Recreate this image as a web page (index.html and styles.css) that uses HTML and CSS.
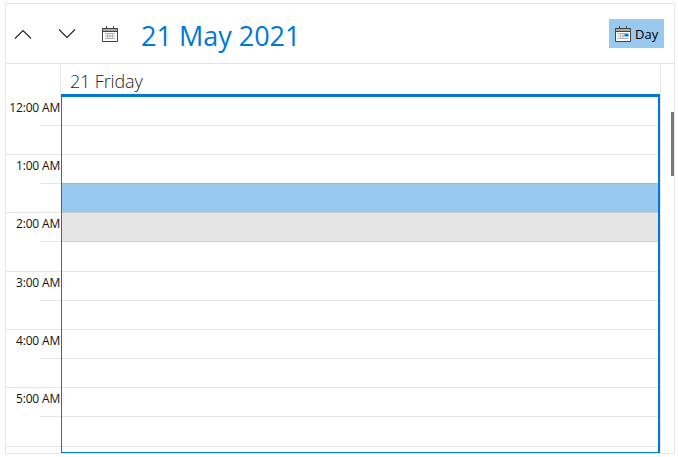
FILE: index.html
```html
<!DOCTYPE html>
<html lang="en">
<head>
<meta charset="utf-8">
<title>Day view</title>
<link rel="stylesheet" href="styles.css">
</head>
<body>
<div class="scheduler">
  <header class="toolbar">
    <div class="nav">
      <svg class="chev" width="18" height="12" viewBox="0 0 18 12"><path d="M1 10.500 9 2.500 17 10.500"/></svg>
      <svg class="chev second" width="18" height="12" viewBox="0 0 18 12"><path d="M1 1.500 9 9.500 17 1.500"/></svg>
      <svg class="cal" width="18" height="18" viewBox="0 0 18 18"><path class="dk" d="M1.500 3.500h15v13h-15z"/><path class="bar" d="M1.500 3.500h15v3h-15z"/><path class="dk" d="M5.500 1v3M12.500 1v3"/><path class="gr" d="M4 8.500h10M4 11h10M4 13.500h10M6.500 8v6M9 8v6M11.500 8v6"/></svg>
    </div>
    <h1 class="title">21 May 2021</h1>
    <button class="view-btn">
      <svg class="cal" width="18" height="18" viewBox="0 0 18 18"><path class="wh" d="M1.500 3.500h15v13h-15z"/><path class="bar" d="M1.500 3.500h15v3h-15z"/><path class="dk" d="M5.500 1v3M12.500 1v3"/><path class="gr" d="M3.500 8.500h7M3.500 11h7M3.500 13.500h11M6.500 8v6M9 8v6"/><path class="bl" d="M10.500 8.500h4v3h-4z"/></svg>
      <span>Day</span>
    </button>
  </header>
  <div class="day-head">
    <div class="corner"></div>
    <div class="day-name">21 Friday</div>
    <div class="head-gap"></div>
  </div>
  <div class="body">
    <div class="times">
      <div class="hour"><span>12:00 AM</span></div>
      <div class="hour"><span>1:00 AM</span></div>
      <div class="hour"><span>2:00 AM</span></div>
      <div class="hour"><span>3:00 AM</span></div>
      <div class="hour"><span>4:00 AM</span></div>
      <div class="hour"><span>5:00 AM</span></div>
      <div class="hour"></div>
    </div>
    <div class="slots">
      <div class="slot"></div><div class="slot"></div>
      <div class="slot"></div><div class="slot sel"></div>
      <div class="slot grey"></div><div class="slot"></div>
      <div class="slot"></div><div class="slot"></div>
      <div class="slot"></div><div class="slot"></div>
      <div class="slot"></div><div class="slot"></div>
      <div class="slot"></div>
      <div class="focus"></div>
    </div>
    <div class="scroll"><div class="thumb"></div></div>
  </div>
</div>
</body>
</html>
```
FILE: styles.css
```css
html, body { margin: 0; padding: 0; background: #fff; }
body { width: 678px; height: 457px; overflow: hidden; font-family: "Open Sans", "Liberation Sans", sans-serif; }
.scheduler {
  box-sizing: border-box;
  width: 670px;
  height: 451px;
  margin: 3px 0 0 5px;
  border: 1px solid #e6e6e6;
  display: flex;
  flex-direction: column;
  overflow: hidden;
}
.toolbar {
  flex: none;
  height: 60px;
  box-sizing: border-box;
  border-bottom: 1px solid #e6e6e6;
  display: flex;
  align-items: center;
  padding: 0 10px 0 8px;
}
.nav { display: flex; align-items: center; width: 127px; }
.chev { fill: none; stroke: #222; stroke-width: 1.100; }
.chev.second { margin-left: 26px; }
.nav .cal { margin-left: 25px; }
.dk { fill: none; stroke: #444; stroke-width: 1; }
.wh { fill: #fff; stroke: #444; stroke-width: 1; }
.bar { fill: #aaa; stroke: #444; stroke-width: 1; }
.gr { fill: none; stroke: #b4b4b4; stroke-width: 1; }
.bl { fill: #0078d7; }
.title {
  margin: 0;
  font-weight: 400;
  font-size: 27px;
  color: #0078d7;
  flex: 1;
  line-height: 36px;
  padding-top: 4px;
}
.view-btn {
  border: 0;
  background: #99c9ef;
  height: 29px;
  width: 55px;
  padding: 0 0 0 5px;
  display: flex;
  align-items: center;
  gap: 3px;
  font: 13px "Open Sans", "Liberation Sans", sans-serif;
  color: #000;
}
.day-head { flex: none; height: 33px; display: flex; }
.corner { width: 54px; border-right: 1px solid #e6e6e6; }
.day-name {
  flex: 1;
  padding-left: 9px;
  font-size: 18px;
  font-weight: 300;
  line-height: 34px;
  letter-spacing: -0.15px;
  color: #222;
}
.head-gap { width: 13px; border-left: 1px solid #e6e6e6; }
.body { flex: 1; display: flex; min-height: 0; position: relative; }
.times { width: 55px; flex: none; }
.hour {
  box-sizing: border-box;
  height: 58.200px;
  border-bottom: 1px solid #e6e6e6;
  text-align: right;
  font-size: 12px;
  line-height: 22px;
  color: #111;
  position: relative;
}
.hour:nth-child(6) { height: 59.200px; }
.hour span { display: block; padding-right: 1px; letter-spacing: -0.18px; }
.hour::after {
  content: "";
  position: absolute;
  left: 34px;
  right: 0;
  top: 28.100px;
  height: 1px;
  background: #e6e6e6;
}
.slots { flex: 1; position: relative; border-left: 1px solid #e6e6e6; }
.slot { box-sizing: border-box; height: 29.100px; border-bottom: 1px solid #e6e6e6; }
.slot:nth-child(12) { height: 30.100px; }
.slot.sel { background: #99c9ef; border-bottom-color: #c8c8c8; box-shadow: 0 -1px 0 #a8b8c4; }
.slot.grey { background: #e5e5e5; border-bottom-color: #d0d0d0; }
.focus {
  position: absolute;
  left: -1px;
  top: -3px;
  right: 0;
  bottom: 0;
  border: 2px solid #0078d7;
  border-top-width: 3px;
  border-left-width: 1px;
  border-bottom-width: 1px;
  pointer-events: none;
}
.scroll { width: 14px; flex: none; position: relative; border-left: 1px solid #e6e6e6; box-sizing: border-box; }
.thumb {
  position: absolute;
  right: 0;
  top: 15px;
  width: 3px;
  height: 64px;
  background: #7a7a7a;
}
```
